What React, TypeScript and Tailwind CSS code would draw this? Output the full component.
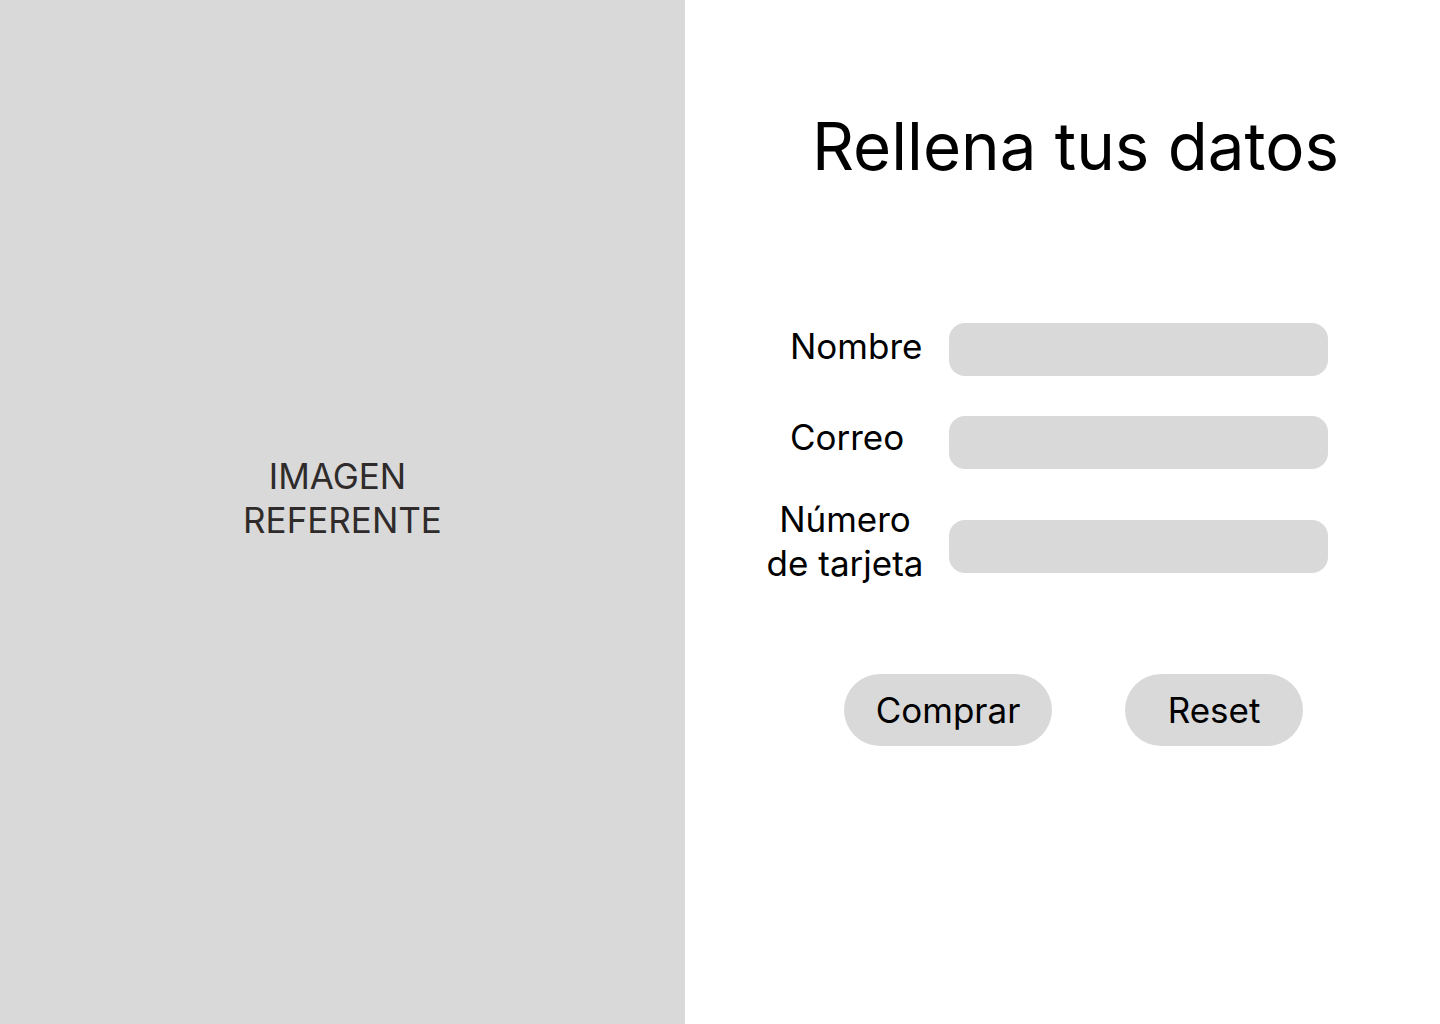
import React from 'react';

const font = { fontFamily: 'Inter, "Noto Sans", sans-serif' };

const Field: React.FC<{ label: React.ReactNode; labelClass: string; rowClass: string }> = ({ label, labelClass, rowClass }) => (
  <div className={`flex items-start ${rowClass}`}>
    <div className="w-[184px] shrink-0">
      <div className={`text-[35px] leading-[44px] text-black ${labelClass}`}>{label}</div>
    </div>
    <input className="w-[379px] h-[53px] rounded-[16px] bg-[#d9d9d9] outline-none px-4 text-[24px]" />
  </div>
);

export default function App() {
  return (
    <div className="flex w-[1440px] h-[1024px] bg-white" style={font}>
      {/* imagen */}
      <div className="w-[685px] h-full bg-[#d9d9d9] flex items-center justify-center">
        <p className="text-[35px] leading-[44px] text-[#2f2b2b] text-center -mt-[28px]">
          <span className="inline-block pr-[10px]">IMAGEN</span>
          <br />
          REFERENTE
        </p>
      </div>

      {/* formulario */}
      <div className="flex-1 flex flex-col">
        <h1 className="mt-[104px] pl-[127px] text-[65.4px] leading-[86px] text-black">Rellena tus datos</h1>

        <div className="pl-[80px] mt-[133px]">
          <Field label="Nombre" labelClass="pl-[25px] mt-[1px]" rowClass="" />
          <Field label="Correo" labelClass="pl-[25px] -mt-[1px]" rowClass="mt-[40px]" />
          <Field
            label={<>Número<br />de tarjeta</>}
            labelClass="w-[160px] text-center -mt-[23px]"
            rowClass="mt-[51px]"
          />
        </div>

        <div className="flex pl-[159px] mt-[89px] gap-[73px]">
          <button className="w-[208px] h-[72px] rounded-full bg-[#d9d9d9] text-[35px] text-black">Comprar</button>
          <button className="w-[178px] h-[72px] rounded-full bg-[#d9d9d9] text-[35px] text-black">Reset</button>
        </div>
      </div>
    </div>
  );
}
